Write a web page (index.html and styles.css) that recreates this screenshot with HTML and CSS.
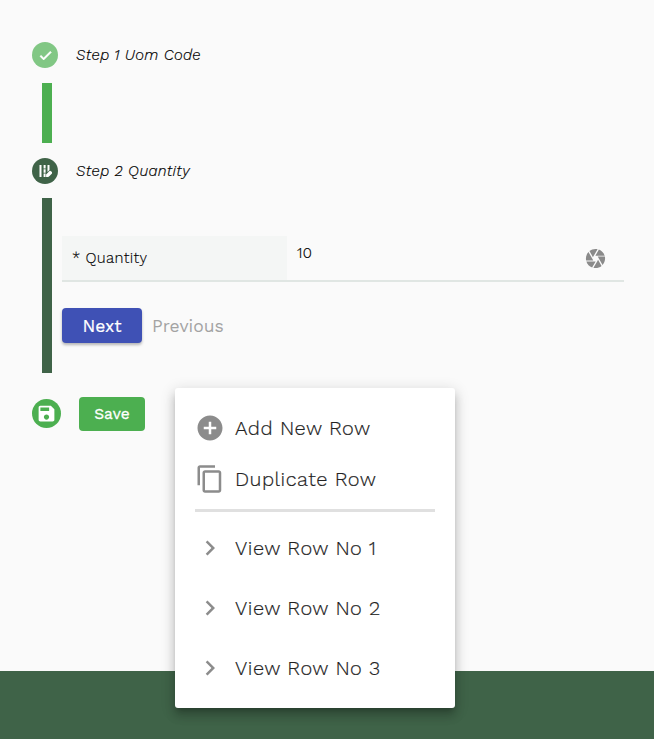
FILE: index.html
```html
<!DOCTYPE html>
<html lang="en">
<head>
<meta charset="utf-8">
<title>Quantity</title>
<link rel="stylesheet" href="styles.css">
</head>
<body>
<main class="stepper">
  <section class="step">
    <header class="step-head">
      <span class="badge badge-done"><svg viewBox="0 0 24 24" width="15" height="15"><path d="M9 16.170 4.830 12l-1.420 1.410L9 19 21 7l-1.410-1.410z" stroke="#fff" stroke-width="1.500"/></svg></span>
      <span class="step-title">Step 1 Uom Code</span>
    </header>
    <div class="step-body step-body-done"></div>
  </section>
  <section class="step">
    <header class="step-head">
      <span class="badge badge-active"><svg viewBox="0 0 14 14" width="14" height="14"><path d="M1.500 1h2v12h-2zM5.600 1h2v3.400h-2zM5.600 5.300h2v3.400h-2zM5.600 9.600h2V13h-2zM9.500 1h2v5L9.500 8zM8.100 10.400l3.400-3.500q.6-.4 1.100 0l1.400 1.200q.4.600 0 1.300L11.500 12q-.7 1-1.700 1H8.100z"/></svg></span>
      <span class="step-title">Step 2 Quantity</span>
    </header>
    <div class="step-body step-body-active">
      <div class="field">
        <label class="field-label">* Quantity</label>
        <span class="field-value">10</span>
        <svg class="camera" viewBox="0 0 24 24" width="23" height="23"><path d="M9.400 10.500l4.770-8.260C13.470 2.090 12.750 2 12 2c-2.400 0-4.600.850-6.320 2.250l3.660 6.350.060-.1zM21.540 9c-.920-2.920-3.150-5.260-6-6.340L11.880 9h9.660zm.260 1h-7.490l.290.5 4.760 8.250C21 16.970 22 14.610 22 12c0-.69-.07-1.350-.2-2zM8.540 12l-3.900-6.750C3.010 7.030 2 9.390 2 12c0 .69.070 1.350.2 2h7.490l-1.150-2zm-6.080 3c.920 2.920 3.150 5.260 6 6.340L12.120 15H2.460zm11.270 0-3.900 6.760c.7.150 1.420.240 2.170.240 2.400 0 4.600-.850 6.320-2.250l-3.660-6.350-.930 1.600z"/></svg>
      </div>
      <div class="actions">
        <button class="next">Next</button>
        <button class="previous">Previous</button>
      </div>
    </div>
  </section>
  <div class="save-row">
    <span class="badge badge-save"><svg viewBox="0 0 24 24" width="21" height="21"><path d="M17 3H5c-1.110 0-2 .9-2 2v14c0 1.100.890 2 2 2h14c1.100 0 2-.9 2-2V7l-4-4zm-5 16c-1.660 0-3-1.340-3-3s1.340-3 3-3 3 1.340 3 3-1.340 3-3 3zm3-10H5V5h10v4z"/></svg></span>
    <button class="save">Save</button>
  </div>
</main>
<footer class="footer"></footer>
<nav class="menu">
  <a class="item"><svg viewBox="0 0 24 24" width="30" height="30"><path d="M12 2C6.480 2 2 6.480 2 12s4.480 10 10 10 10-4.480 10-10S17.520 2 12 2zm5 11h-4v4h-2v-4H7v-2h4V7h2v4h4v2z"/></svg><span>Add New Row</span></a>
  <a class="item item-copy"><svg viewBox="0 0 24 24" width="30" height="30"><path d="M16 1H4c-1.100 0-2 .9-2 2v14h2V3h12V1zm3 4H8c-1.100 0-2 .9-2 2v14c0 1.100.9 2 2 2h11c1.100 0 2-.9 2-2V7c0-1.100-.9-2-2-2zm0 16H8V7h11v14z"/></svg><span>Duplicate Row</span></a>
  <hr class="divider">
  <a class="item"><svg viewBox="0 0 24 24" width="30" height="30"><path d="M10 6 8.590 7.410 13.170 12l-4.580 4.590L10 18l6-6z"/></svg><span>View Row No 1</span></a>
  <a class="item"><svg viewBox="0 0 24 24" width="30" height="30"><path d="M10 6 8.590 7.410 13.170 12l-4.580 4.590L10 18l6-6z"/></svg><span>View Row No 2</span></a>
  <a class="item"><svg viewBox="0 0 24 24" width="30" height="30"><path d="M10 6 8.590 7.410 13.170 12l-4.580 4.590L10 18l6-6z"/></svg><span>View Row No 3</span></a>
</nav>
</body>
</html>
```
FILE: styles.css
```css
* { box-sizing: border-box; }
body {
  margin: 0;
  position: relative;
  width: 654px;
  height: 739px;
  overflow: hidden;
  background: #fafafa;
  color: #000;
  font-family: "Work Sans", Inter, sans-serif;
  display: flex;
  flex-direction: column;
}
svg { display: block; flex: none; }
button { font-family: inherit; border: 0; padding: 0; }
.stepper { height: 671.4px; padding: 42px 30px 0 32px; }
.step-head { display: flex; align-items: center; height: 26px; }
.badge { display: flex; align-items: center; justify-content: center; border-radius: 50%; width: 26px; height: 26px; fill: #fff; }
.badge-done { background: #81c784; }
.badge-active { background: #3f6348; }
.badge-save { background: #4caf50; width: 29px; height: 29px; }
.step-title { margin-left: 18px; font-size: 15px; line-height: 24px; font-style: italic; font-weight: 300; letter-spacing: .36px; -webkit-text-stroke: .2px; white-space: nowrap; }
.step-body { margin: 14.700px 0 0 10px; border-left: 10px solid; }
.step-body-done { height: 60px; border-color: #4caf50; margin-bottom: 15px; }
.step-body-active { height: 175px; border-color: #3f6348; padding: 38px 0 0 10px; }
.field { display: flex; height: 46px; border-bottom: 2px solid #e0e6e3; }
.field-label { width: 225px; padding-left: 10px; line-height: 44px; font-size: 15px; font-weight: 300; letter-spacing: .35px; -webkit-text-stroke: .15px; background: #f4f6f5; }
.field-value { flex: 1; padding-left: 10px; font-size: 15px; font-weight: 300; letter-spacing: .3px; -webkit-text-stroke: .2px; line-height: 34px; }
.camera { margin: 11px 17px 0 0; fill: #8a8a8a; }
.actions { display: flex; margin-top: 26px; height: 35px; }
.next { width: 80px; background: #3f51b5; color: #fff; border-radius: 4px; font-size: 17.500px; font-weight: 400; -webkit-text-stroke: .2px; padding-top: 1px; box-shadow: 0 2px 3px rgba(0,0,0,.28); }
.previous { margin-left: 10px; background: none; color: #a3a3a3; font-size: 17.500px; padding-top: 1px; }
.save-row { display: flex; align-items: center; margin-top: 23.400px; height: 34px; }
.save { margin-left: 18px; width: 66px; height: 34px; background: #4caf50; color: #fff; border-radius: 4px; font-size: 15.500px; font-weight: 400; letter-spacing: .1px; -webkit-text-stroke: .3px; }
.footer { flex: 1; background: #3f6348; }
.menu { position: absolute; left: 175px; top: 388px; width: 280px; height: 320px; padding: 10px 20px; background: #fff; border-radius: 3px; box-shadow: 0 5px 5px -3px rgba(0,0,0,.2), 0 8px 10px 1px rgba(0,0,0,.14), 0 3px 14px 2px rgba(0,0,0,.12); }
.item { display: flex; align-items: center; height: 60px; color: #222; font-size: 20px; line-height: 24px; font-weight: 300; letter-spacing: .52px; -webkit-text-stroke: .2px; white-space: nowrap; }
.item svg { fill: #8c8c8c; margin-right: 10px; }
.item span { padding-bottom: 1px; }
.item-copy { height: 42px; }
.divider { height: 3px; margin: 9px 0 6px; border: 0; background: #e0e0e0; }
```
